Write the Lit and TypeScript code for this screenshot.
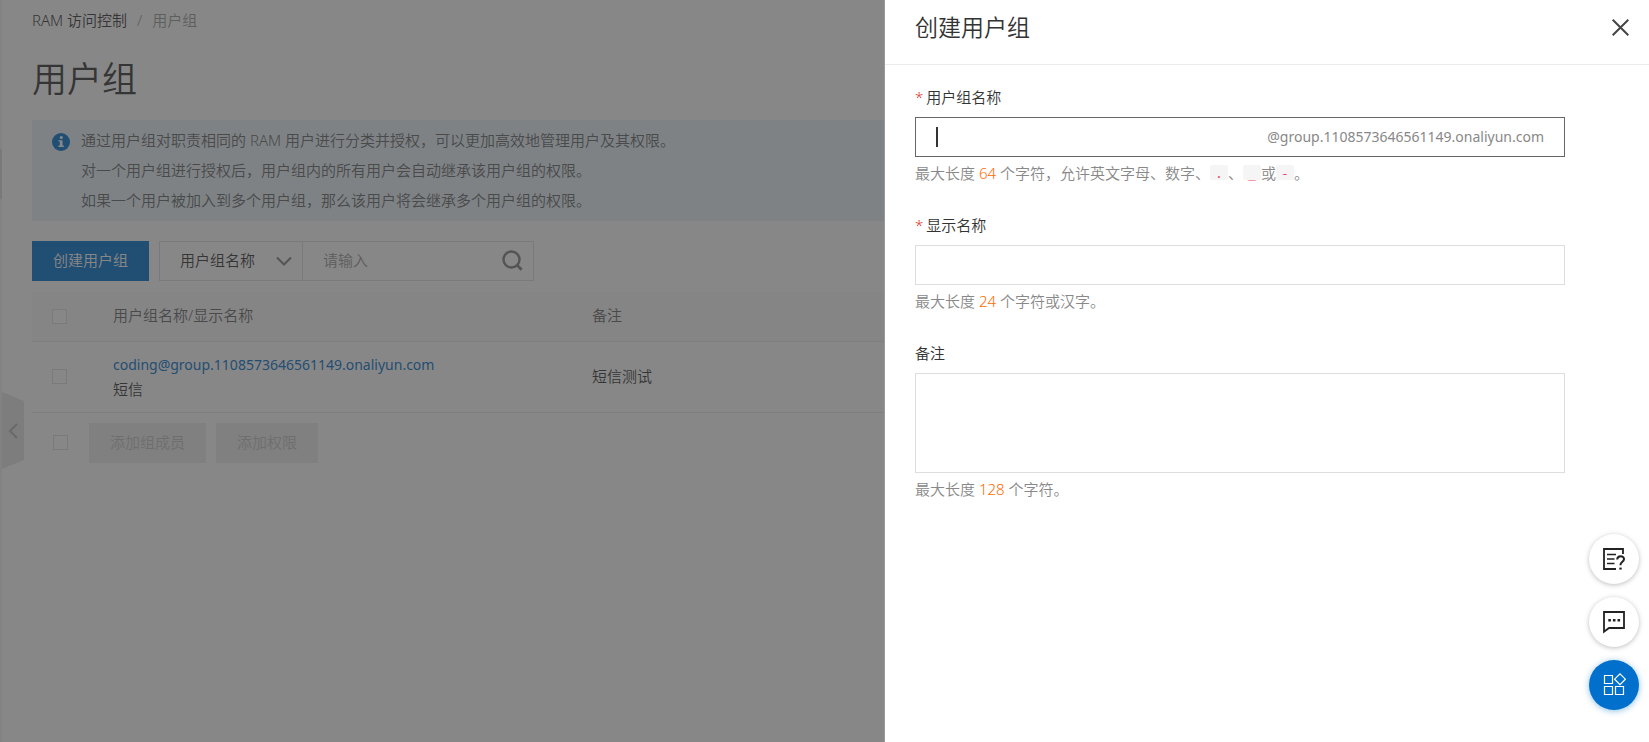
import { LitElement, html, css, svg } from "lit";
import { customElement, property } from "lit/decorators.js";

const fontStack = css`"Noto Sans", "Noto Sans CJK SC", sans-serif`;

@customElement("form-field")
class FormField extends LitElement {
  static styles = css`
    :host {
      display: block;
    }
    .hint {
      margin-top: 5px;
      line-height: 22px;
      color: #888;
    }
  `;

  render() {
    return html`
      <slot></slot>
      <div class="hint"><slot name="hint"></slot></div>
    `;
  }
}

@customElement("console-page")
class ConsolePage extends LitElement {
  static styles = css`
    :host {
      display: flex;
      min-height: 100vh;
      background: #fff;
      color: #333;
      position: relative;
    }
    * {
      box-sizing: border-box;
    }
    button,
    input,
    select {
      font: inherit;
      color: inherit;
      margin: 0;
    }
    .rail {
      flex: none;
      width: 2px;
      background: #f2f2f2;
      padding-top: 149px;
    }
    .rail-active {
      height: 50px;
      background: #dcdcdc;
    }
    .collapse {
      position: absolute;
      left: 2px;
      top: 392px;
      width: 22px;
      height: 77px;
      padding: 0;
      border: 0;
      background: #e6e6e6;
      clip-path: polygon(0 0, 100% 9px, 100% 68px, 0 100%);
      display: flex;
      align-items: center;
      justify-content: center;
    }
    .main {
      flex: 1;
      min-width: 0;
      padding: 9px 30px 30px;
    }
    .crumbs {
      display: flex;
      gap: 10px;
      line-height: 22px;
    }
    .crumbs a {
      color: #333;
      text-decoration: none;
    }
    .crumbs span {
      color: #999;
    }
    h1 {
      margin: 20px 0 13px;
      font-size: 35px;
      line-height: 56px;
      font-weight: inherit;
    }
    .notice {
      display: flex;
      gap: 11px;
      padding: 5px 20px 6px;
      background: #e8f3fb;
      color: #666;
      line-height: 30px;
    }
    .notice svg {
      flex: none;
      margin-top: 8px;
    }
    .notice p {
      margin: 0;
    }
    .tools {
      display: flex;
      gap: 10px;
      margin-top: 20px;
    }
    .primary {
      height: 40px;
      padding: 0 21px 4px;
      border: 0;
      background: #0070cc;
      color: #fff;
    }
    .search {
      display: flex;
      width: 375px;
      height: 40px;
      border: 1px solid #dedede;
    }
    .picker {
      display: flex;
      align-items: center;
      border-right: 1px solid #dedede;
      padding-right: 10px;
      width: 143px;
    }
    .picker select {
      appearance: none;
      flex: 1;
      min-width: 0;
      height: 38px;
      border: 0;
      background: none;
      padding: 0 0 2px 20px;
      outline: 0;
    }
    .search input {
      flex: 1;
      min-width: 0;
      border: 0;
      background: none;
      padding: 0 20px 2px;
      outline: 0;
    }
    .search input::placeholder {
      color: #999;
      opacity: 1;
    }
    .go {
      flex: none;
      border: 0;
      background: none;
      padding: 0 10px 2px 0;
      display: flex;
      align-items: center;
    }
    table {
      width: 100%;
      margin-top: 11px;
      border-collapse: collapse;
      table-layout: fixed;
      line-height: 25px;
    }
    th,
    td {
      padding: 0;
      text-align: left;
      font-weight: inherit;
      border-bottom: 1px solid #ebebeb;
    }
    th {
      height: 49px;
      padding-bottom: 2px;
      background: #fafafa;
      color: #666;
    }
    td {
      height: 71px;
    }
    .col-check {
      width: 81px;
    }
    .col-name {
      width: 479px;
    }
    th:first-child,
    td:first-child {
      padding-left: 20px;
      padding-bottom: 0;
    }
    .mail {
      display: block;
      font-size: 14px;
      font-weight: 400;
      color: #0070cc;
      text-decoration: none;
    }
    input[type="checkbox"] {
      appearance: none;
      display: block;
      width: 15px;
      height: 15px;
      border: 1px solid #dedede;
      background: #fff;
    }
    .batch {
      display: flex;
      align-items: center;
      gap: 10px;
      padding: 10px 21px;
    }
    .batch input {
      margin-right: 11px;
    }
    .batch button {
      height: 40px;
      padding: 0 21px 3px;
      border: 0;
      background: #ededed;
      color: #c1c1c1;
    }
  `;

  render() {
    return html`
      <nav class="rail" aria-label="侧栏"><div class="rail-active"></div></nav>
      <button class="collapse" aria-label="收起">
        <svg width="10" height="16" viewBox="0 0 10 16" fill="none" stroke="#b5b5b5" stroke-width="2">
          <path d="M9 1 L2 8 L9 15" />
        </svg>
      </button>
      <main class="main">
        <nav class="crumbs" aria-label="面包屑">
          <a href="#">RAM 访问控制</a><span>/</span><span>用户组</span>
        </nav>
        <h1>用户组</h1>
        <section class="notice">
          <svg width="18" height="18" viewBox="0 0 18 18">
            <circle cx="9" cy="9" r="9" fill="#0070cc" />
            <circle cx="9.3" cy="4.5" r="1.6" fill="#fff" />
            <path d="M6.5 7.2h4v5.4h1.3v1.4H6.4v-1.4h1.4V8.6H6.5z" fill="#fff" />
          </svg>
          <div>
            <p>通过用户组对职责相同的 RAM 用户进行分类并授权，可以更加高效地管理用户及其权限。</p>
            <p>对一个用户组进行授权后，用户组内的所有用户会自动继承该用户组的权限。</p>
            <p>如果一个用户被加入到多个用户组，那么该用户将会继承多个用户组的权限。</p>
          </div>
        </section>
        <div class="tools">
          <button class="primary">创建用户组</button>
          <div class="search">
            <div class="picker">
              <select aria-label="搜索字段">
                <option>用户组名称</option>
              </select>
              <svg width="16" height="10" viewBox="0 0 16 10" fill="none" stroke="#808080" stroke-width="2">
                <path d="M1 1.5 L8 8.5 L15 1.5" />
              </svg>
            </div>
            <input type="text" placeholder="请输入" aria-label="搜索" />
            <button class="go" aria-label="搜索">
              <svg width="21" height="21" viewBox="0 0 21 21" fill="none" stroke="#808080" stroke-width="2.4">
                <circle cx="9.5" cy="9.5" r="8" />
                <path d="M14.5 14.5 L19.6 19.8" stroke-width="2.8" />
              </svg>
            </button>
          </div>
        </div>
        <table>
          <thead>
            <tr>
              <th class="col-check"><input type="checkbox" aria-label="全选" /></th>
              <th class="col-name">用户组名称/显示名称</th>
              <th>备注</th>
            </tr>
          </thead>
          <tbody>
            <tr>
              <td><input type="checkbox" aria-label="选择短信" /></td>
              <td>
                <a class="mail" href="#">coding@group.1108573646561149.onaliyun.com</a>
                短信
              </td>
              <td>短信测试</td>
            </tr>
          </tbody>
        </table>
        <div class="batch">
          <input type="checkbox" aria-label="全选当前页" />
          <button disabled>添加组成员</button>
          <button disabled>添加权限</button>
        </div>
      </main>
    `;
  }
}

@customElement("create-drawer")
class CreateDrawer extends LitElement {
  static styles = css`
    :host {
      display: block;
      background: #fff;
      color: #333;
    }
    * {
      box-sizing: border-box;
    }
    header {
      display: flex;
      align-items: center;
      justify-content: space-between;
      height: 65px;
      padding: 0 20px 10px 30px;
      border-bottom: 1px solid #ebebeb;
    }
    h2 {
      margin: 0;
      font-size: 23px;
      line-height: 32px;
      font-weight: inherit;
    }
    .close {
      display: flex;
      padding: 0;
      border: 0;
      background: none;
    }
    form {
      display: grid;
      gap: 30px;
      padding: 21px 84px 30px 30px;
    }
    label {
      display: block;
      line-height: 22px;
      margin-bottom: 9px;
    }
    .star {
      color: #d93026;
      margin-right: 3px;
    }
    .box,
    textarea {
      display: flex;
      align-items: center;
      width: 100%;
      height: 40px;
      border: 1px solid #dedede;
      background: #fff;
      padding: 0 20px;
    }
    .focused {
      border-color: #666;
    }
    .caret {
      width: 2px;
      height: 20px;
      background: #333;
    }
    .suffix {
      padding-bottom: 2px;
      font-size: 14px;
      font-weight: 400;
      color: #888;
    }
    input {
      flex: 1;
      min-width: 0;
      height: 38px;
      padding: 0;
      border: 0;
      outline: 0;
      background: none;
      font: inherit;
      color: inherit;
      caret-color: transparent;
    }
    textarea {
      height: 100px;
      resize: none;
      font: inherit;
      padding: 8px 20px;
    }
    .num {
      color: #ff6a00;
    }
    code {
      display: inline-block;
      width: 18px;
      height: 15px;
      line-height: 17px;
      border-radius: 2px;
      background: #f5f5f5;
      color: #f0436f;
      font-family: "DejaVu Sans Mono", monospace;
      font-size: 13px;
      font-weight: 400;
      text-align: center;
      vertical-align: 1px;
    }
  `;

  render() {
    return html`
      <header>
        <h2>创建用户组</h2>
        <button class="close" aria-label="关闭">
          <svg width="17" height="17" viewBox="0 0 17 17" stroke="#444" stroke-width="2">
            <path d="M0.7 0.7 L16.3 16.3 M16.3 0.7 L0.7 16.3" />
          </svg>
        </button>
      </header>
      <form>
        <form-field>
          <label for="name"><span class="star">*</span>用户组名称</label>
          <div class="box focused">
            <span class="caret"></span>
            <input id="name" type="text" />
            <span class="suffix">@group.1108573646561149.onaliyun.com</span>
          </div>
          <span slot="hint">最大长度 <span class="num">64</span> 个字符，允许英文字母、数字、<code>.</code>、<code>_</code>或<code>-</code>。</span>
        </form-field>
        <form-field>
          <label for="display"><span class="star">*</span>显示名称</label>
          <div class="box"><input id="display" type="text" /></div>
          <span slot="hint">最大长度 <span class="num">24</span> 个字符或汉字。</span>
        </form-field>
        <form-field>
          <label for="remark">备注</label>
          <textarea id="remark"></textarea>
          <span slot="hint">最大长度 <span class="num">128</span> 个字符。</span>
        </form-field>
      </form>
    `;
  }
}

@customElement("float-button")
class FloatButton extends LitElement {
  @property() kind = "help";
  @property() label = "";

  static styles = css`
    button {
      display: flex;
      align-items: center;
      justify-content: center;
      width: 50px;
      height: 50px;
      padding: 0;
      border: 0;
      border-radius: 50%;
      background: #fff;
      box-shadow: 0 1px 5px rgba(0, 0, 0, 0.26);
    }
    .apps {
      background: #0070cc;
      box-shadow: 0 1px 6px rgba(0, 112, 204, 0.45);
    }
  `;

  private icon() {
    switch (this.kind) {
      case "help":
        return svg`
          <path d="M21 7V2H2V22H14" stroke-width="1.8" />
          <path d="M5 7.5H14M5 12H12.5M5 16.5H12.5" stroke-width="1.6" />
          <path d="M15.2 12.6C15.2 8 22.2 8.2 22 12.2C21.9 14.8 18.4 14.8 18.4 18.2" stroke-width="2" />
          <path d="M17.3 21.6H19.7" stroke-width="2" />`;
      case "chat":
        return svg`
          <path d="M2 2H22V18H7L2 21.8Z" stroke-width="1.8" />
          <path d="M6.3 10.2H8.9M10.9 10.2H13.5M15.5 10.2H18.1" stroke-width="2.6" />`;
      default:
        return svg`
          <path d="M2.5 2.5H10.5V10.5H2.5ZM2.5 13.5H10.5V21.5H2.5ZM13.5 13.5H21.5V21.5H13.5Z" stroke-width="1.2" />
          <path d="M18 0.8L23.4 6.2L18 11.6L12.6 6.2Z" stroke-width="1.2" />`;
    }
  }

  render() {
    return html`
      <button class=${this.kind} aria-label=${this.label}>
        <svg width="24" height="24" viewBox="0 0 24 24" fill="none" stroke=${this.kind === "apps" ? "#fff" : "#222"}>
          ${this.icon()}
        </svg>
      </button>
    `;
  }
}

@customElement("app-root")
class AppRoot extends LitElement {
  static styles = css`
    :host {
      display: block;
      position: relative;
      min-height: 100vh;
      font-family: ${fontStack};
      font-size: 15px;
      font-weight: 350;
      overflow: hidden;
    }
    .mask {
      position: absolute;
      inset: 0;
      display: flex;
      justify-content: flex-end;
      background: rgba(55, 55, 55, 0.6);
    }
    .drawer {
      width: 765px;
      box-sizing: border-box;
      border-left: 1px solid #999;
    }
    .floats {
      position: absolute;
      right: 10px;
      bottom: 32px;
      display: grid;
      gap: 13px;
    }
  `;

  render() {
    return html`
      <console-page></console-page>
      <div class="mask">
        <create-drawer class="drawer" role="dialog" aria-label="创建用户组"></create-drawer>
      </div>
      <div class="floats">
        <float-button kind="help" label="帮助文档"></float-button>
        <float-button kind="chat" label="在线咨询"></float-button>
        <float-button kind="apps" label="应用"></float-button>
      </div>
    `;
  }
}
